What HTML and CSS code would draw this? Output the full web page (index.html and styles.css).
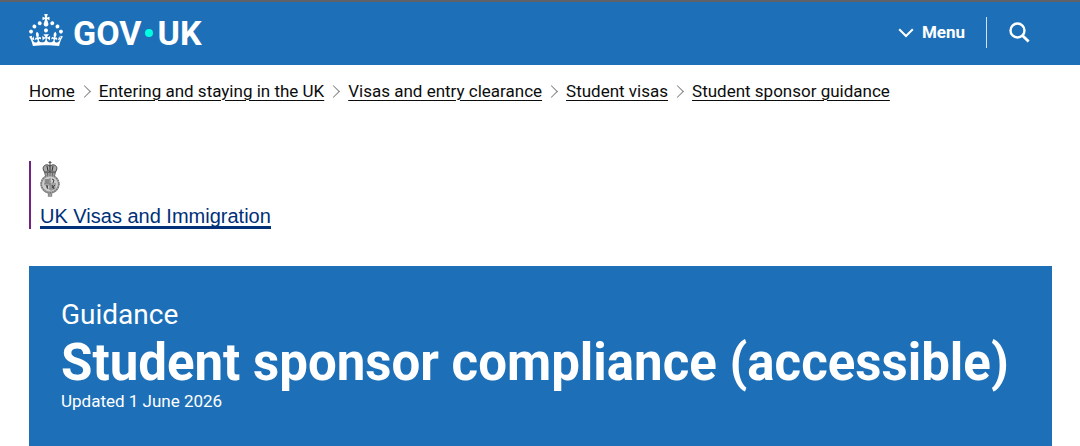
FILE: index.html
```html
<!DOCTYPE html>
<html lang="en">
<head>
<meta charset="utf-8">
<meta name="viewport" content="width=device-width, initial-scale=1">
<title>Student sponsor compliance (accessible) - GOV.UK</title>
<link rel="stylesheet" href="styles.css">
</head>
<body>
<header class="site-header">
  <a class="logo" href="#" aria-label="GOV.UK">
    <svg class="logo-crown" viewBox="0 0 32 30" preserveAspectRatio="none" aria-hidden="true"><path fill="currentColor" d="M22.6 10.4c-1 .4-2-.1-2.4-1-.4-.9.1-2 1-2.4.9-.4 2 .1 2.4 1s-.1 2-1 2.4m-5.9 6.7c-.9.4-2-.1-2.4-1-.4-.9.1-2 1-2.4.9-.4 2 .1 2.4 1s-.1 2-1 2.4m10.8-3.7c-1 .4-2-.1-2.4-1-.4-.9.1-2 1-2.4.9-.4 2 .1 2.4 1s0 2-1 2.4m3.3 4.8c-1 .4-2-.1-2.4-1-.4-.9.1-2 1-2.4.9-.4 2 .1 2.4 1s-.1 2-1 2.4M17 4.7l2.3 1.2V2.5l-2.3.7-.2-.2.9-3h-3.4l.9 3-.2.2c-.1.1-2.3-.7-2.3-.7v3.4L15 4.7c.1.1.1.2.2.2l-1.3 4c-.1.2-.1.4-.1.6 0 1.1.8 2 1.9 2.2h.7c1-.2 1.9-1.1 1.9-2.1 0-.2 0-.4-.1-.6l-1.3-4c-.1-.2 0-.2.1-.3m-7.6 5.7c.9.4 2-.1 2.4-1 .4-.9-.1-2-1-2.4-.9-.4-2 .1-2.4 1s0 2 1 2.4m-5 3c.9.4 2-.1 2.4-1 .4-.9-.1-2-1-2.4-.9-.4-2 .1-2.4 1s.1 2 1 2.4m-3.2 4.8c.9.4 2-.1 2.4-1 .4-.9-.1-2-1-2.4-.9-.4-2 .1-2.4 1s0 2 1 2.4m14.8 11c4.4 0 8.6.3 12.3.8 1.1-4.5 2.4-7 3.7-8.8l-2.5-.9c.2 1.3.3 1.9 0 2.7-.4-.4-.8-1.1-1.1-2.3l-1.2 4c.7-.5 1.3-.8 2-.9-1.1 2.5-2.6 3.1-3.5 3-1.1-.2-1.7-1.2-1.5-2.1.3-1.2 1.5-1.5 2.1-.1 1.1-2.3-.8-3-2-2.3 1.9-1.9 2.1-3.5.6-5.6-2.1 1.6-2.1 3.2-1.2 5.5-1.2-1.4-3.2-.6-2.5 1.6.9-1.4 2.1-.5 1.9.8-.2 1.1-1.7 2.1-3.5 1.9-2.7-.2-2.9-2.1-2.9-3.6.7-.1 1.9.5 2.9 1.9l.4-4.3c-1.1 1.1-2.1 1.4-3.2 1.4.4-1.2 2.1-3 2.1-3h-5.4s1.7 1.9 2.1 3c-1.1 0-2.1-.2-3.2-1.4l.4 4.3c1-1.4 2.2-2 2.9-1.9-.1 1.5-.2 3.4-2.9 3.6-1.9.2-3.4-.8-3.5-1.9-.2-1.3 1-2.2 1.9-.8.7-2.3-1.2-3-2.5-1.6.9-2.2.9-3.9-1.2-5.5-1.5 2-1.3 3.7.6 5.6-1.2-.7-3.1 0-2 2.3.6-1.4 1.8-1.1 2.1.1.2.9-.3 1.9-1.5 2.1-.9.2-2.4-.5-3.5-3 .6 0 1.2.3 2 .9l-1.2-4c-.3 1.1-.7 1.9-1.1 2.3-.3-.8-.2-1.4 0-2.7l-2.9.9C1.3 23 2.6 25.5 3.7 30c3.7-.5 7.9-.8 12.3-.8"/></svg>
    <span class="logo-text">GOV<span class="logo-dot"></span>UK</span>
  </a>
  <div class="header-actions">
    <button class="menu-button" type="button">
      <svg class="menu-chevron" viewBox="0 0 16 10" aria-hidden="true"><path d="M1.2 1.2 8 8l6.8-6.8" fill="none" stroke="currentColor" stroke-width="2"/></svg>
      Menu
    </button>
    <button class="search-button" type="button" aria-label="Search">
      <svg class="search-icon" viewBox="0 0 21 21" aria-hidden="true"><circle cx="8.5" cy="8.5" r="7" fill="none" stroke="currentColor" stroke-width="2.4"/><path d="m13.4 13.4 6.2 6.2" stroke="currentColor" stroke-width="2.8"/></svg>
    </button>
  </div>
</header>
<div class="container">
  <nav aria-label="Breadcrumb">
    <ol class="breadcrumbs">
      <li><a href="#">Home</a></li>
      <li><a href="#">Entering and staying in the UK</a></li>
      <li><a href="#">Visas and entry clearance</a></li>
      <li><a href="#">Student visas</a></li>
      <li><a href="#">Student sponsor guidance</a></li>
    </ol>
  </nav>
  <div class="organisation">
    <svg class="crest" viewBox="0 0 20 36" aria-hidden="true">
      <path d="M10 0v4M8.500 1.500h3" stroke="#555" stroke-width="1.200"/>
      <path d="M4.500 11C1 6 5 3 8 4l2 1 2-1c3-1 7 2 3.500 7z" fill="#aaa" stroke="#444"/>
      <path d="M10 4v7M7 5l1 5m5-5-1 5" stroke="#333"/>
      <path d="M4 11h12l-1 4H5z" fill="#666"/>
      <path d="M5.500 13h9" stroke="#ddd" stroke-dasharray="1.500 1"/>
      <ellipse cx="10" cy="23" rx="8.800" ry="8.600" fill="#ccc" stroke="#aaa" stroke-width="2"/>
      <ellipse cx="10" cy="23" rx="8.800" ry="8.600" fill="none" stroke="#777" stroke-width="1.500" stroke-dasharray="1.500 1"/>
      <path d="M4.500 18h5v5h-5zm6 6h5v4l-5 2z" fill="#999"/>
      <path d="M10 17v12M4 23h12M5.500 19h3.500M5 21h4" stroke="#777"/>
      <path d="m12 18 2 1-1 3m-1 2 2 4m1-4-3 3m-6-3 2 4m0-4-1 3" fill="none" stroke="#444"/>
      <path d="m4 30 4 2 2 1 2-1 4-2M8.500 33v2h3v-2" fill="none" stroke="#888" stroke-width="1.300"/>
    </svg>
    <a class="organisation-link" href="#">UK Visas and Immigration</a>
  </div>
  <main class="banner">
    <p class="banner-context">Guidance</p>
    <h1 class="banner-title">Student sponsor compliance (accessible)</h1>
    <p class="banner-date">Updated 1 June 2026</p>
  </main>
</div>
</body>
</html>
```

FILE: styles.css
```css
* { box-sizing: border-box; }

body {
  margin: 0;
  color: #0b0c0c;
  background: #fff;
  font-family: Roboto, "Liberation Sans", sans-serif;
}

button {
  padding: 0;
  border: 0;
  background: none;
  color: inherit;
  font: inherit;
  cursor: pointer;
}

svg { display: block; }

.site-header {
  display: flex;
  justify-content: space-between;
  padding: 0 28px 2px 29px;
  border-top: 2px solid #5f6368;
  background: #1d70b8;
  color: #fff;
}

.logo {
  display: flex;
  align-items: center;
  gap: 10px;
  height: 61px;
  padding-bottom: 5px;
  color: inherit;
  text-decoration: none;
}

.logo-crown { width: 34px; height: 32px; }

.logo-text {
  display: flex;
  align-items: center;
  padding-top: 6px;
  font: bold 34px/32px Roboto, sans-serif;
}

.logo-dot {
  width: 8px;
  height: 8px;
  margin: 0 4px;
  border-radius: 50%;
  background: #00ffe0;
}

.header-actions {
  display: flex;
  align-items: center;
}

.menu-button {
  display: flex;
  align-items: center;
  gap: 8px;
  padding-right: 21px;
  border-right: 1px solid #d2e2f1;
  font-size: 17px;
  font-weight: bold;
  line-height: 31px;
}

.menu-chevron { width: 16px; height: 10px; }

.search-button { padding: 0 22px; }

.search-icon { width: 21px; height: 21px; }

.container { padding: 0 28px 0 29px; }

.breadcrumbs {
  display: flex;
  flex-wrap: wrap;
  margin: 0;
  padding: 16px 0 60px;
  list-style: none;
  font-size: 17px;
  line-height: 20px;
}

.breadcrumbs li {
  display: flex;
  align-items: center;
}

.breadcrumbs li + li::before {
  content: "";
  width: 8px;
  height: 8px;
  margin: 0 10px 0 5px;
  border: solid #7f8283;
  border-width: 1px 1px 0 0;
  rotate: 45deg;
}

.breadcrumbs a {
  color: inherit;
  text-decoration-thickness: 1px;
  text-underline-offset: 3px;
}

.organisation {
  display: flex;
  flex-direction: column;
  align-items: flex-start;
  margin-bottom: 37px;
  padding-left: 9px;
  border-left: 2px solid #732282;
}

.crest { width: 20px; height: 36px; }

.organisation-link {
  margin-top: 9px;
  border-bottom: 3px solid #003078;
  color: #003078;
  font: 20px/20px "Liberation Sans", Arial, sans-serif;
  text-decoration: none;
}

.banner {
  padding: 32px 32px 36px;
  background: #1d70b8;
  color: #fff;
}

.banner p, .banner h1 { margin: 0; }

.banner .banner-context { font-size: 28px; line-height: 34px; }

.banner .banner-title {
  padding-top: 2px;
  font-size: 51px;
  line-height: 58px;
}

.banner .banner-date {
  font-size: 17px;
  line-height: 18px;
}
```
